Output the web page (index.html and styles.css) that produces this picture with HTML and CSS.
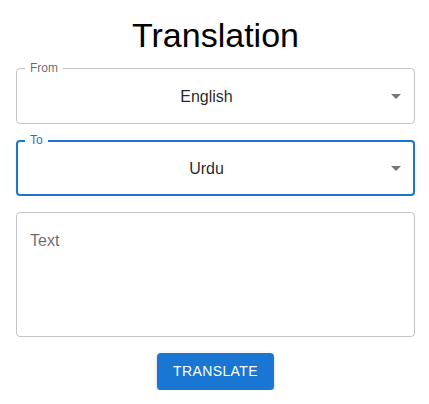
FILE: index.html
```html
<!DOCTYPE html>
<html lang="en">
<head>
<meta charset="utf-8">
<title>Translation</title>
<link rel="stylesheet" href="styles.css">
</head>
<body>
<main class="container">
  <h1 class="title">Translation</h1>
  <div class="select">
    <span class="label">From</span>
    <span class="value">English</span>
    <svg class="arrow" viewBox="0 0 24 24" width="24" height="24"><path d="M7 10l5 5 5-5z"/></svg>
  </div>
  <div class="select focused">
    <span class="label">To</span>
    <span class="value">Urdu</span>
    <svg class="arrow" viewBox="0 0 24 24" width="24" height="24"><path d="M7 10l5 5 5-5z"/></svg>
  </div>
  <div class="textarea">
    <span class="placeholder">Text</span>
  </div>
  <div class="actions">
    <button class="btn" type="button">Translate</button>
  </div>
</main>
</body>
</html>
```

FILE: styles.css
```css
* { box-sizing: border-box; }
html, body { margin: 0; padding: 0; background: #fff; }
body {
  font-family: "Liberation Sans", Arial, sans-serif;
  color: rgba(0, 0, 0, 0.87);
}
.container {
  padding: 14px 14px 0 16px;
  display: flex;
  flex-direction: column;
  gap: 16px;
}
.title {
  margin: 0 0 -4px;
  font-size: 34px;
  font-weight: 400;
  line-height: 42px;
  text-align: center;
  color: #000;
}
.select {
  position: relative;
  height: 56px;
  border: 1px solid rgba(0, 0, 0, 0.23);
  border-radius: 4px;
  display: flex;
  align-items: center;
  justify-content: center;
  padding: 0 32px 0 14px;
  font-size: 16px;
}
.select.focused {
  border: 2px solid #1976d2;
  padding: 0 31px 0 13px;
}
.value { line-height: 23px; }
.label {
  position: absolute;
  top: -8px;
  left: 8px;
  padding: 0 5px;
  background: #fff;
  font-size: 12px;
  line-height: 14px;
  color: rgba(0, 0, 0, 0.6);
}
.focused .label { top: -9px; left: 7px; color: #1976d2; }
.arrow {
  position: absolute;
  right: 6px;
  top: calc(50% - 12px);
  fill: rgba(0, 0, 0, 0.54);
}
.focused .arrow { right: 5px; }
.textarea {
  height: 125px;
  border: 1px solid rgba(0, 0, 0, 0.23);
  border-radius: 4px;
  padding: 16px 13px;
  font-size: 16px;
  line-height: 23px;
}
.placeholder { color: rgba(0, 0, 0, 0.6); }
.actions { display: flex; justify-content: center; }
.btn {
  font-family: "Liberation Sans", Arial, sans-serif;
  font-size: 14px;
  font-weight: 500;
  line-height: 24.5px;
  letter-spacing: 0.4px;
  text-transform: uppercase;
  color: #fff;
  background: #1976d2;
  border: 0;
  border-radius: 4px;
  padding: 6px 16px;
  box-shadow: 0 3px 1px -2px rgba(0,0,0,0.2), 0 2px 2px 0 rgba(0,0,0,0.14), 0 1px 5px 0 rgba(0,0,0,0.12);
}
```
